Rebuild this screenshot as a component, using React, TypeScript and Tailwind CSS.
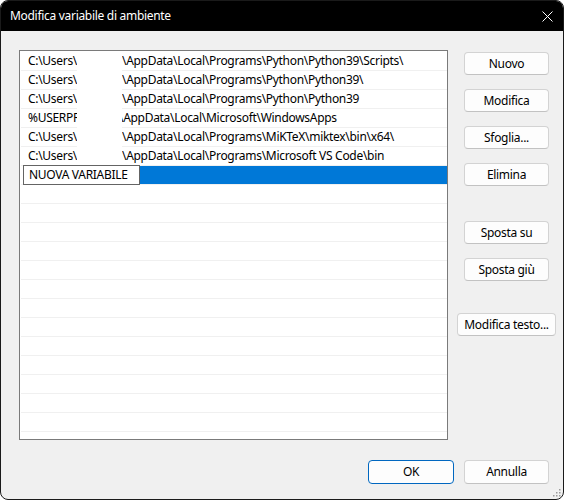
import React from "react";

type PathRow = { head: string; tail: string; shift?: boolean };

const paths: PathRow[] = [
  { head: "C:\\Users\\", tail: "\\AppData\\Local\\Programs\\Python\\Python39\\Scripts\\" },
  { head: "C:\\Users\\", tail: "\\AppData\\Local\\Programs\\Python\\Python39\\" },
  { head: "C:\\Users\\", tail: "\\AppData\\Local\\Programs\\Python\\Python39" },
  { head: "%USERPROFILE%", tail: "\\AppData\\Local\\Microsoft\\WindowsApps", shift: true },
  { head: "C:\\Users\\", tail: "\\AppData\\Local\\Programs\\MiKTeX\\miktex\\bin\\x64\\" },
  { head: "C:\\Users\\", tail: "\\AppData\\Local\\Programs\\Microsoft VS Code\\bin" },
];

function Button({
  children,
  className = "",
}: {
  children: React.ReactNode;
  className?: string;
}) {
  return (
    <div
      className={`flex h-[23px] shrink-0 items-center justify-center rounded-[4px] border border-[#d3d3d3] border-b-[#c2c2c2] bg-[#fdfdfd] text-[12px] text-black ${className}`}
    >
      {children}
    </div>
  );
}

function PathLine({ row }: { row: PathRow }) {
  return (
    <div className="ml-px flex h-[19px] shrink-0 text-[12px] leading-[18px] text-black">
      <div className="w-[56px] shrink-0 overflow-hidden whitespace-nowrap border-b border-[#f0f0f0] pl-[7px]">
        {row.head}
      </div>
      <div className="w-[45px] shrink-0" />
      <div className="flex-1 overflow-hidden whitespace-nowrap border-b border-[#f0f0f0]">
        <span className={row.shift ? "ml-[-3px] inline-block" : "inline-block"}>{row.tail}</span>
      </div>
    </div>
  );
}

function EditingLine() {
  return (
    <div className="relative ml-px flex h-[19px] shrink-0 border-b border-[#f0f0f0]">
      <div className="ml-[119px] flex-1 bg-[#0078d7]" />
      <div className="absolute left-[2px] top-[-1px] flex h-[20px] w-[117px] items-center border border-[#646464] bg-white pl-[5px] text-[12px] text-black">
        NUOVA VARIABILE
      </div>
    </div>
  );
}

function EmptyLine() {
  return <div className="ml-px h-[19px] shrink-0 border-b border-[#f0f0f0]" />;
}

function SizeGrip() {
  const dots = [
    [7, 1],
    [4, 4],
    [7, 4],
    [1, 7],
    [4, 7],
    [7, 7],
  ];
  return (
    <svg
      className="absolute bottom-[2px] right-[2px]"
      width="9"
      height="9"
      viewBox="0 0 9 9"
    >
      {dots.map(([x, y]) => (
        <rect key={`${x}-${y}`} x={x} y={y} width="1.5" height="1.5" fill="#9a9a9a" />
      ))}
    </svg>
  );
}

export default function App() {
  return (
    <div className="h-[501px] w-[564px] bg-white [font-family:'Noto_Sans',sans-serif] tracking-[-0.3px]">
      <div className="relative flex h-[500px] flex-col overflow-hidden rounded-[8px] border border-[#1a1a1a] bg-[#f0f0f0]">
        {/* title bar */}
        <div className="flex h-[30px] shrink-0 items-center justify-between bg-black pl-[9px] pr-[10px]">
          <span className="text-[12px] text-white">Modifica variabile di ambiente</span>
          <svg width="11" height="11" viewBox="0 0 11 11" className="mt-px">
            <path d="M0.5 0.5 L10.5 10.5 M10.5 0.5 L0.5 10.5" stroke="#ffffff" strokeWidth="1" />
          </svg>
        </div>

        {/* list and side buttons */}
        <div className="flex pl-[18px] pt-[19px]">
          <div className="flex h-[390px] w-[429px] flex-col overflow-hidden border border-[#7a7a7a] bg-white pt-px">
            {paths.map((row, i) => (
              <PathLine key={i} row={row} />
            ))}
            <EditingLine />
            {Array.from({ length: 14 }).map((_, i) => (
              <EmptyLine key={i} />
            ))}
          </div>

          <div className="ml-[16px] flex w-[85px] flex-col pt-[2px]">
            <Button>Nuovo</Button>
            <Button className="mt-[14px]">Modifica</Button>
            <Button className="mt-[14px]">Sfoglia...</Button>
            <Button className="mt-[14px]">Elimina</Button>
            <Button className="mt-[35px]">Sposta su</Button>
            <Button className="mt-[14px]">Sposta giù</Button>
            <Button className="-ml-[7px] mt-[32px] w-[99px]">Modifica testo...</Button>
          </div>
        </div>

        {/* dialog buttons */}
        <div className="mt-[20px] flex justify-end gap-[10px] pr-[14px]">
          <div className="flex h-[24px] w-[86px] items-center justify-center rounded-[4px] border border-[#0067c0] bg-[#fdfdfd] text-[12px] text-black">
            OK
          </div>
          <Button className="h-[24px] w-[85px]">Annulla</Button>
        </div>

        <SizeGrip />
      </div>
    </div>
  );
}
